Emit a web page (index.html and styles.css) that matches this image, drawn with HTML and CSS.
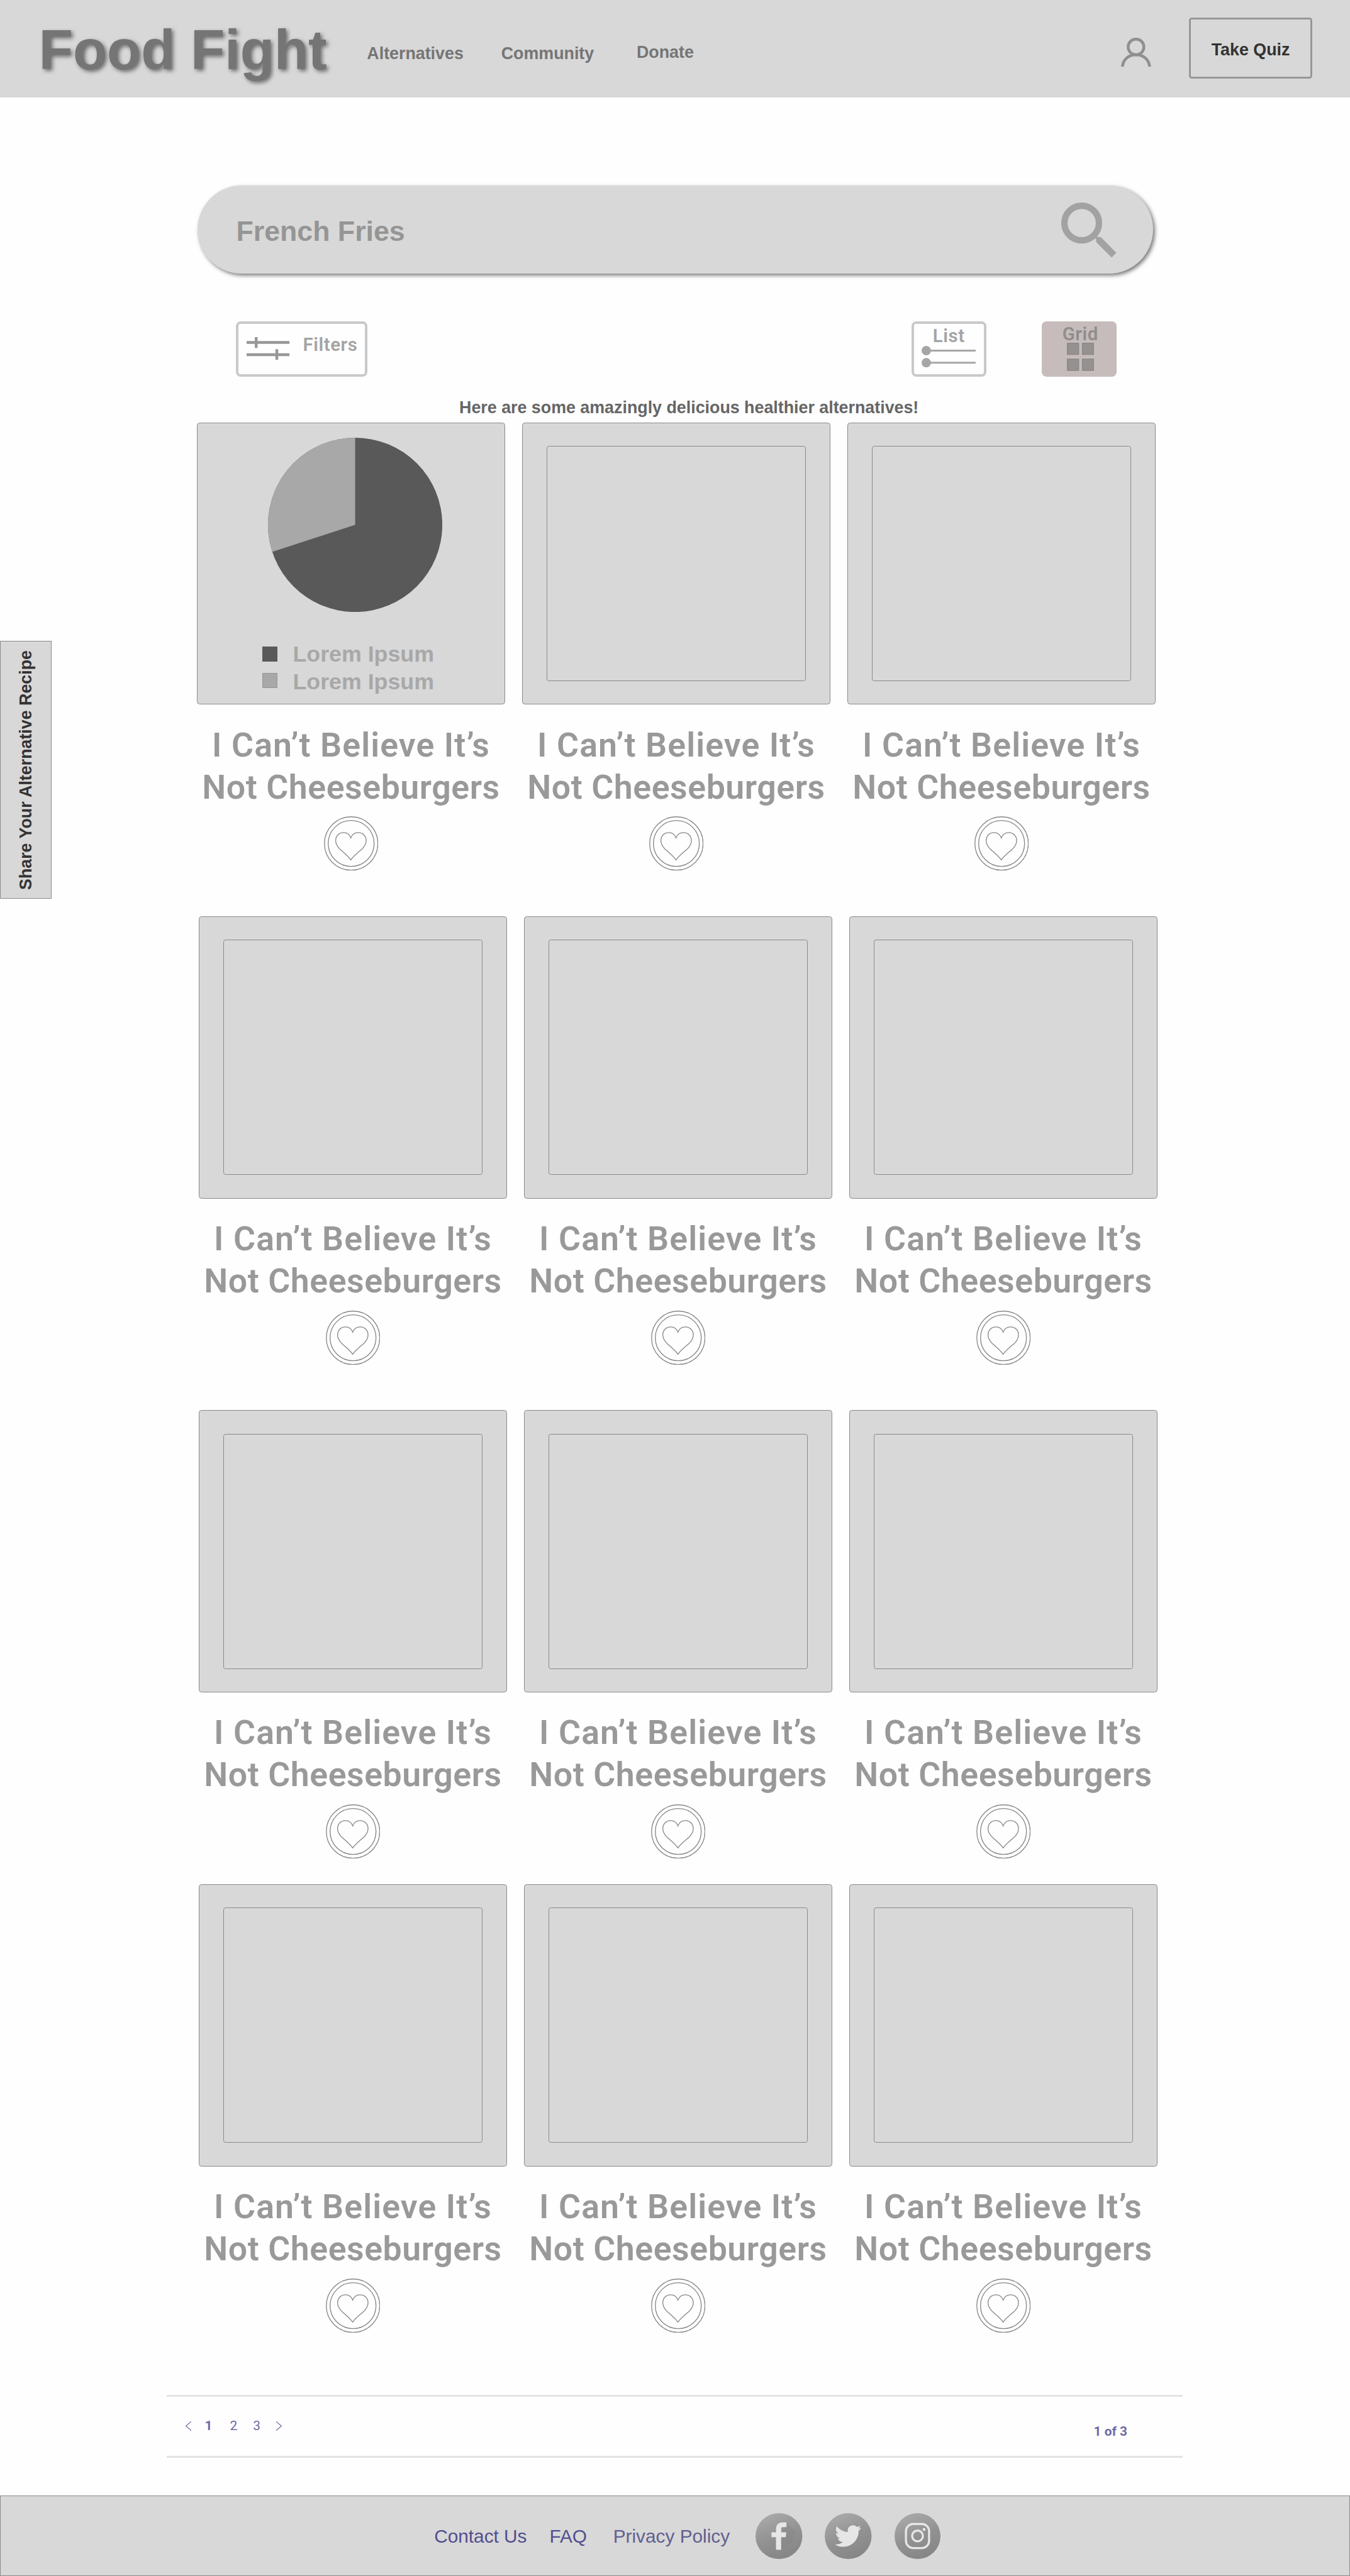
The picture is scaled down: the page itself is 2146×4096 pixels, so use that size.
FILE: index.html
```html
<!DOCTYPE html>
<html lang="en">
<head>
<meta charset="utf-8">
<title>Food Fight</title>
<link rel="stylesheet" href="styles.css">
</head>
<body>
<svg class="defs" aria-hidden="true">
  <defs>
    <linearGradient id="disc" x1="0.3" y1="0" x2="0.7" y2="1">
      <stop offset="0" stop-color="#a9a9a9"/>
      <stop offset="0.5" stop-color="#929292"/>
      <stop offset="1" stop-color="#858585"/>
    </linearGradient>
    <symbol id="heart" viewBox="0 0 116 116">
      <circle cx="58" cy="58" r="57"/>
      <circle cx="58" cy="58" r="49"/>
      <path d="M57.3 46C55 40 50 34.8 42 34.8C32 34.8 25 42 25 51.500C25 58.500 28 64 33 69C41 76.500 51 84 57.300 93C63.500 84 74 76.500 82 69C87 64 90 58.500 90 51.500C90 42 83 34.800 73 34.800C65 34.800 59.500 40 57.300 46Z"/>
    </symbol>
  </defs>
</svg>

<header class="header">
  <h1 class="logo">Food Fight</h1>
  <nav class="nav">
    <a class="nav-link">Alternatives</a>
    <a class="nav-link nav-community">Community</a>
    <a class="nav-link nav-donate">Donate</a>
  </nav>
  <svg class="user" viewBox="0 0 64 62" fill="none" stroke="#8f8f8f" stroke-width="6">
    <circle cx="32" cy="19.700" r="16.800"/>
    <path d="M3 62C4 47 16 36.300 32 36.300S60 47 61 62"/>
  </svg>
  <button class="quiz">Take Quiz</button>
</header>

<main>
  <div class="search">
    <span class="search-text">French Fries</span>
    <svg class="search-icon" viewBox="0 0 118 118">
      <circle cx="43.600" cy="43.800" r="36.900" fill="none" stroke="#a2a2a2" stroke-width="13.600"/>
      <path d="M77 72L78.500 73.800H84.500L117.500 107.500L107.500 117.500L74.500 84.500V78.500L72 76Z" fill="#a2a2a2"/>
    </svg>
  </div>

  <div class="toolbar">
    <button class="tool tool-filters">
      <svg class="filters-icon" viewBox="0 0 92 49" fill="#979797">
        <path d="M0 8.500H91.500V14.500H0ZM17.500 0H23.500V23H17.500ZM0 34.500H91.500V40.500H0ZM61.500 26H67.500V49H61.500Z"/>
      </svg>
      <span class="filters-label">Filters</span>
    </button>
    <button class="tool tool-list">
      <span>List</span>
      <svg class="list-icon" viewBox="0 0 116 46" fill="#a6a6a6">
        <circle cx="10" cy="10" r="10"/><circle cx="10" cy="36" r="10"/>
        <rect x="10" y="8" width="106" height="4" rx="1.500"/><rect x="10" y="34" width="106" height="4" rx="1.500"/>
      </svg>
    </button>
    <button class="tool tool-grid">
      <span class="grid-label">Grid</span>
      <svg class="grid-icon" viewBox="0 0 58 60" fill="#949190" stroke="#8b8887" stroke-width="2">
        <path d="M1 1H25V25H1ZM33 1H57V25H33ZM1 35H25V59H1ZM33 35H57V59H33Z"/>
      </svg>
    </button>
  </div>

  <p class="tagline">Here are some amazingly delicious healthier alternatives!</p>

  <section class="row row-first">
    <article class="item">
      <div class="card card-chart">
        <svg class="pie" viewBox="-186 -186 372 372">
          <circle r="186" fill="#595959"/>
          <path d="M0 0L-176.900 57.480A186 186 0 0 1 0 -186Z" fill="#a8a8a8"/>
        </svg>
        <ul class="legend">
          <li><i class="swatch swatch-dark"></i>Lorem Ipsum</li>
          <li><i class="swatch swatch-light"></i>Lorem Ipsum</li>
        </ul>
      </div>
      <h2 class="title">I Can’t Believe It’s<br>Not Cheeseburgers</h2>
      <svg class="heart"><use href="#heart"/></svg>
    </article>
    <article class="item">
      <div class="card"><div class="photo"></div></div>
      <h2 class="title">I Can’t Believe It’s<br>Not Cheeseburgers</h2>
      <svg class="heart"><use href="#heart"/></svg>
    </article>
    <article class="item">
      <div class="card"><div class="photo"></div></div>
      <h2 class="title">I Can’t Believe It’s<br>Not Cheeseburgers</h2>
      <svg class="heart"><use href="#heart"/></svg>
    </article>
  </section>

  <section class="row">
    <article class="item">
      <div class="card"><div class="photo"></div></div>
      <h2 class="title">I Can’t Believe It’s<br>Not Cheeseburgers</h2>
      <svg class="heart"><use href="#heart"/></svg>
    </article>
    <article class="item">
      <div class="card"><div class="photo"></div></div>
      <h2 class="title">I Can’t Believe It’s<br>Not Cheeseburgers</h2>
      <svg class="heart"><use href="#heart"/></svg>
    </article>
    <article class="item">
      <div class="card"><div class="photo"></div></div>
      <h2 class="title">I Can’t Believe It’s<br>Not Cheeseburgers</h2>
      <svg class="heart"><use href="#heart"/></svg>
    </article>
  </section>

  <section class="row">
    <article class="item">
      <div class="card"><div class="photo"></div></div>
      <h2 class="title">I Can’t Believe It’s<br>Not Cheeseburgers</h2>
      <svg class="heart"><use href="#heart"/></svg>
    </article>
    <article class="item">
      <div class="card"><div class="photo"></div></div>
      <h2 class="title">I Can’t Believe It’s<br>Not Cheeseburgers</h2>
      <svg class="heart"><use href="#heart"/></svg>
    </article>
    <article class="item">
      <div class="card"><div class="photo"></div></div>
      <h2 class="title">I Can’t Believe It’s<br>Not Cheeseburgers</h2>
      <svg class="heart"><use href="#heart"/></svg>
    </article>
  </section>

  <section class="row row-last">
    <article class="item">
      <div class="card"><div class="photo"></div></div>
      <h2 class="title">I Can’t Believe It’s<br>Not Cheeseburgers</h2>
      <svg class="heart"><use href="#heart"/></svg>
    </article>
    <article class="item">
      <div class="card"><div class="photo"></div></div>
      <h2 class="title">I Can’t Believe It’s<br>Not Cheeseburgers</h2>
      <svg class="heart"><use href="#heart"/></svg>
    </article>
    <article class="item">
      <div class="card"><div class="photo"></div></div>
      <h2 class="title">I Can’t Believe It’s<br>Not Cheeseburgers</h2>
      <svg class="heart"><use href="#heart"/></svg>
    </article>
  </section>

  <div class="pagination">
    <svg class="chevron" viewBox="0 0 12 20"><path d="M12 0.500L0.800 10L12 19.500"/></svg>
    <a class="page page-current">1</a>
    <a class="page page-two">2</a>
    <a class="page page-three">3</a>
    <svg class="chevron chevron-next" viewBox="0 0 12 20"><path d="M0 0.500L11.200 10L0 19.500"/></svg>
    <span class="page-count">1 of 3</span>
  </div>
</main>

<footer class="footer">
  <a class="foot-link">Contact Us</a>
  <a class="foot-link foot-faq">FAQ</a>
  <a class="foot-link foot-privacy">Privacy Policy</a>
  <div class="social">
    <svg class="social-icon" viewBox="0 0 100 98">
      <ellipse cx="50" cy="49" rx="50" ry="49" fill="url(#disc)"/>
      <path d="M66 20L88 41L78 62L54.700 78V41Z" fill="#808080" opacity="0.250"/>
      <path d="M43.700 78.300V51.300H34V41H43.700V34C43.700 25 49 19.700 58 19.700H66V30H58.500C56 30 54.700 31 54.700 33.500V41H65.600L64.500 51.300H54.700V78.300Z" fill="#e6e6e6"/>
    </svg>
    <svg class="social-icon" viewBox="0 0 100 98">
      <ellipse cx="50" cy="49" rx="50" ry="49" fill="url(#disc)"/>
      <path transform="translate(21.700 20.700) scale(2.350)" fill="#e6e6e6" d="M23.953 4.570a10 10 0 01-2.825.775 4.958 4.958 0 002.163-2.723c-.951.555-2.005.959-3.127 1.184a4.920 4.920 0 00-8.384 4.482C7.690 8.095 4.067 6.130 1.640 3.162a4.822 4.822 0 00-.666 2.475c0 1.710.870 3.213 2.188 4.096a4.904 4.904 0 01-2.228-.616v.060a4.923 4.923 0 003.946 4.827 4.996 4.996 0 01-2.212.085 4.936 4.936 0 004.604 3.417 9.867 9.867 0 01-6.102 2.105c-.390 0-.779-.023-1.170-.067a13.995 13.995 0 007.557 2.209c9.053 0 13.998-7.496 13.998-13.985 0-.210 0-.420-.015-.630A9.935 9.935 0 0024 4.590z"/>
    </svg>
    <svg class="social-icon social-instagram" viewBox="0 0 98 98">
      <circle cx="49" cy="49" r="49" fill="url(#disc)"/>
      <g fill="none" stroke="#e6e6e6" stroke-width="4.500">
        <rect x="24.300" y="23.200" width="49.400" height="51.400" rx="15.500"/>
        <circle cx="49" cy="48.800" r="11.500"/>
      </g>
      <circle cx="63" cy="35" r="3.200" fill="#e6e6e6"/>
    </svg>
  </div>
</footer>

<aside class="share"><span>Share Your Alternative Recipe</span></aside>
</body>
</html>
```

FILE: styles.css
```css
/* 1rem is one hundredth of the 5498-unit design height */
html {
  font-size: 74.5px;
}

* {
  box-sizing: border-box;
}

body {
  margin: 0;
  position: relative;
  width: 28.805rem;
  background: #fefefe;
  font-family: "Liberation Sans", Arial, sans-serif;
}

h1, h2, p, ul {
  margin: 0;
  padding: 0;
}

svg {
  display: block;
  flex: none;
}

button {
  padding: 0;
  background: none;
  font: inherit;
  color: inherit;
}

.defs {
  position: absolute;
  width: 0;
  height: 0;
}

/* Header */
.header {
  display: flex;
  align-items: flex-start;
  height: 2.08rem;
  padding: 0 0.8rem;
  background: #d8d8d8;
}

.logo {
  width: 6.2rem;
  padding: 0.47rem 0 0 0.03rem;
  font-size: 1.19rem;
  line-height: 1.2rem;
  font-weight: 700;
  white-space: nowrap;
  color: #757575;
  text-shadow: 0.04rem 0.04rem 0.08rem rgba(0, 0, 0, 0.5);
}

.nav {
  display: flex;
  padding-top: 0.95rem;
  margin-left: 0.83rem;
}

.nav-link {
  font-size: 0.36rem;
  line-height: 0.4rem;
  font-weight: 700;
  color: #757575;
}

.nav-community {
  margin-left: 0.804rem;
}

.nav-donate {
  margin: -0.02rem 0 0 0.91rem;
}

.user {
  width: 0.64rem;
  height: 0.62rem;
  margin: 0.8rem 0.8rem 0 auto;
}

.quiz {
  width: 2.64rem;
  height: 1.3rem;
  margin-top: 0.38rem;
  padding-top: 0.08rem;
  border: 3px solid #979797;
  border-radius: 0.06rem;
  font-size: 0.36rem;
  font-weight: 700;
  color: #333;
}

/* Search */
.search {
  display: flex;
  justify-content: space-between;
  width: 20.38rem;
  height: 1.88rem;
  margin: 1.88rem 0 0 4.22rem;
  padding: 0 0.78rem 0 0.82rem;
  border-radius: 0.94rem;
  background: #d8d8d8;
  box-shadow: 0.04rem 0.04rem 0.08rem rgba(0, 0, 0, 0.52);
}

.search-text {
  padding-top: 0.632rem;
  font-size: 0.6rem;
  line-height: 0.7rem;
  font-weight: 700;
  color: #959595;
}

.search-icon {
  width: 1.18rem;
  height: 1.18rem;
  margin-top: 0.36rem;
}

/* Toolbar */
.toolbar {
  display: flex;
  gap: 1.18rem;
  margin-top: 1.02rem;
  padding: 0 4.98rem 0 5.04rem;
}

.tool {
  display: flex;
  flex-direction: column;
  align-items: center;
  width: 1.6rem;
  height: 1.18rem;
  border: 4px solid #c9c9c9;
  border-radius: 0.1rem;
  font-family: Roboto, sans-serif;
  font-size: 0.395rem;
  line-height: 0.4rem;
  font-weight: 600;
  letter-spacing: 0.02em;
  color: #a4a4a4;
}

.tool-filters {
  flex-direction: row;
  align-items: flex-start;
  width: 2.8rem;
  margin-right: auto;
  padding-left: 0.17rem;
}

.filters-icon {
  width: 0.92rem;
  height: 0.49rem;
  margin-top: 0.28rem;
}

.filters-label {
  margin: 0.25rem 0 0 0.28rem;
}

.tool-list {
  padding-top: 0.065rem;
}

.list-icon {
  width: 1.16rem;
  height: 0.46rem;
}

.tool-grid {
  border: 0;
  padding-top: 0.08rem;
  background: #c6bcbb;
  color: #908d8c;
}

.grid-label {
  margin-left: 0.05rem;
}

.grid-icon {
  width: 0.58rem;
  height: 0.6rem;
  margin: -0.02rem 0 0 0.06rem;
}

.tagline {
  margin: 0.468rem 0 0.112rem 9.8rem;
  font-size: 0.36rem;
  line-height: 0.4rem;
  font-weight: 700;
  white-space: nowrap;
  color: #666;
}

/* Results */
.row {
  display: flex;
  gap: 0.36rem;
  margin-bottom: 0.97rem;
  padding-left: 4.24rem;
}

.row-first {
  padding-left: 4.2rem;
}

.row:nth-of-type(3) {
  margin-bottom: 0.55rem;
}

.row-last {
  margin-bottom: 1.33rem;
}

.item {
  display: flex;
  flex-direction: column;
  align-items: center;
  width: 6.58rem;
}

.card {
  display: flex;
  align-items: center;
  justify-content: center;
  width: 100%;
  height: 6.02rem;
  border: 1px solid #8a8a8a;
  border-radius: 0.06rem;
  background: #d8d8d8;
}

.photo {
  width: 5.54rem;
  height: 5.02rem;
  border: 1px solid #8a8a8a;
  border-radius: 0.05rem;
}

.card-chart {
  flex-direction: column;
  align-items: flex-start;
  justify-content: flex-start;
}

.pie {
  width: 3.72rem;
  height: 3.72rem;
  margin: 0.305rem 0 0 1.505rem;
}

.legend {
  margin: 0.625rem 0 0 1.385rem;
  list-style: none;
  font-size: 0.48rem;
  line-height: 0.58rem;
  font-weight: 700;
  color: #a8a8a8;
}

.legend li {
  display: flex;
  gap: 0.33rem;
}

.swatch {
  width: 0.32rem;
  height: 0.32rem;
  margin-top: 0.12rem;
}

.swatch-dark {
  background: #595959;
}

.swatch-light {
  margin-top: 0.1rem;
  border: 1px solid #979797;
  background: #a8a8a8;
}

.title {
  margin-top: 0.404rem;
  font-family: Roboto, sans-serif;
  font-size: 0.72rem;
  line-height: 0.9rem;
  font-weight: 600;
  letter-spacing: 0.0104em;
  text-align: center;
  white-space: nowrap;
  color: #999;
}

.title::first-line {
  letter-spacing: 0.0205em;
}

.heart {
  width: 1.16rem;
  height: 1.16rem;
  margin-top: 0.186rem;
  fill: none;
  stroke: #888;
  stroke-width: 1.8;
}

/* Pagination */
.pagination {
  display: flex;
  align-items: flex-start;
  width: 21.675rem;
  height: 1.34rem;
  margin-left: 3.56rem;
  padding: 0.474rem 1.18rem 0 0.4rem;
  border: solid #e3e3e3;
  border-width: 3px 0;
  font-family: Roboto, sans-serif;
  font-size: 0.28rem;
  line-height: 0.3rem;
  color: #6e6aa5;
}

.chevron {
  width: 0.12rem;
  height: 0.2rem;
  margin-top: 0.047rem;
  overflow: visible;
  fill: none;
  stroke: #6e6aa5;
  stroke-width: 1.6;
}

.page {
  width: 0.3rem;
  text-align: center;
}

.page-current {
  margin-left: 0.22rem;
  font-weight: 700;
}

.page-two {
  margin-left: 0.235rem;
}

.page-three {
  margin-left: 0.195rem;
}

.chevron-next {
  margin-left: 0.27rem;
}

.page-count {
  margin: 0.12rem 0 0 auto;
  font-weight: 700;
  white-space: nowrap;
}

/* Footer */
.footer {
  display: flex;
  align-items: flex-start;
  height: 1.72rem;
  margin-top: 0.8rem;
  padding-left: 9.25rem;
  border: 1px solid #8a8a8a;
  background: #d8d8d8;
}

.foot-link {
  width: 1.98rem;
  padding-top: 0.605rem;
  font-size: 0.4rem;
  line-height: 0.5rem;
  white-space: nowrap;
  color: #524f8e;
}

.foot-faq {
  width: 0.82rem;
  margin-left: 0.48rem;
}

.foot-privacy {
  width: 2.49rem;
  margin-left: 0.54rem;
  color: #625f90;
}

.social {
  display: flex;
  gap: 0.48rem;
  margin: 0.365rem 0 0 0.55rem;
}

.social-icon {
  width: 1rem;
  height: 0.98rem;
}

.social-instagram {
  width: 0.98rem;
}

/* Tab fixed to the left edge, over the page */
.share {
  position: absolute;
  top: 13.68rem;
  left: 0;
  display: flex;
  align-items: center;
  justify-content: center;
  width: 1.1rem;
  height: 5.5rem;
  padding-left: 0.03rem;
  border: 1px solid #8a8a8a;
  background: #d8d8d8;
  font-size: 0.36rem;
  line-height: 0.4rem;
  font-weight: 700;
  white-space: nowrap;
  color: #333;
}

.share span {
  writing-mode: vertical-rl;
  transform: rotate(180deg);
}
```
